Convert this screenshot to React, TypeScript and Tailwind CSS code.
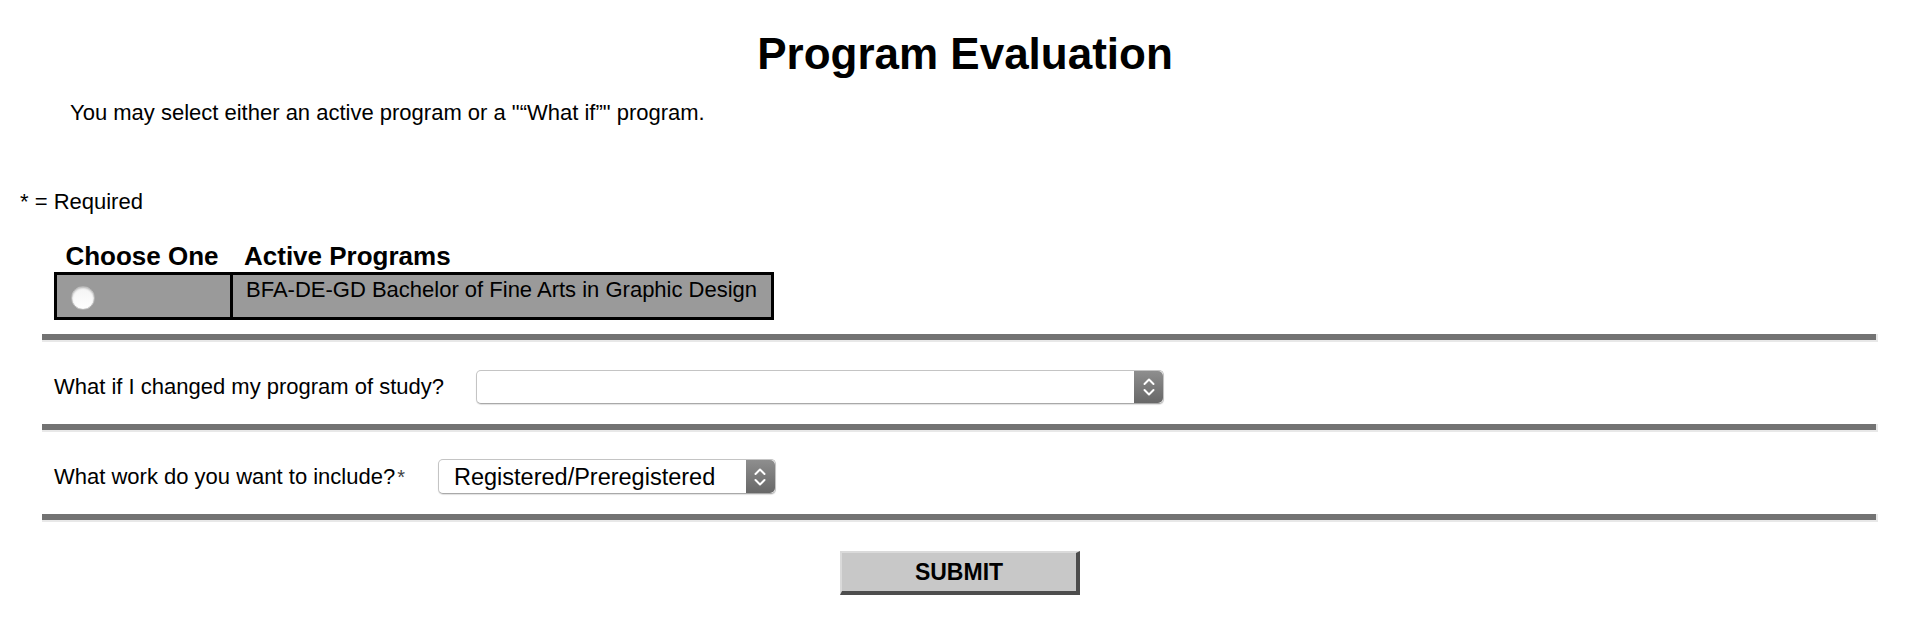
import React from "react";

function Chevrons() {
  return (
    <svg width="12" height="20" viewBox="0 0 12 20" fill="none">
      <path d="M1.5 7 L6 2.5 L10.5 7" stroke="white" strokeWidth="2" strokeLinecap="round" strokeLinejoin="round" />
      <path d="M1.5 13 L6 17.5 L10.5 13" stroke="white" strokeWidth="2" strokeLinecap="round" strokeLinejoin="round" />
    </svg>
  );
}

function FakeSelect({ width, height, text }: { width: string; height: string; text?: string }) {
  return (
    <div
      className={`flex items-stretch rounded-[5px] border border-[#c4c4c4] border-b-[#a9a9a9] bg-white shadow-[0_1px_1px_rgba(0,0,0,0.12)] ${width} ${height}`}
    >
      <div className="flex flex-1 items-center pl-[15px] text-[23.5px] leading-[26px] text-black">{text}</div>
      <div className="flex w-[29px] items-center justify-center rounded-r-[5px] bg-linear-to-b from-[#8e8e8e] to-[#686868]">
        <Chevrons />
      </div>
    </div>
  );
}

function Separator({ className = "" }: { className?: string }) {
  return <div className={`mx-[42px] h-[8px] bg-[#737373] border-b-2 border-r-2 border-[#e8e8e8] ${className}`} />;
}

export default function App() {
  return (
    <div className="min-h-[620px] w-full bg-white pt-[32px] text-black font-['Liberation_Sans',Arial,Helvetica,sans-serif]">
      <h1 className="pl-[10px] text-center text-[44px] font-bold leading-[44px]">Program Evaluation</h1>
      <p className="mt-[24px] pl-[70px] text-[22px] leading-[26px]">
        You may select either an active program or a "“What if”" program.
      </p>
      <p className="mt-[63px] pl-[20px] text-[22px] leading-[26px]">* = Required</p>

      <div className="ml-[54px] mt-[26px] w-[720px]">
        <div className="grid h-[30px] grid-cols-[176px_544px] items-center text-[26px] font-bold leading-[30px]">
          <div className="text-center">Choose One</div>
          <div className="pl-[14px]">Active Programs</div>
        </div>
        <div className="mt-[1px] flex h-[48px] border-[3px] border-black bg-[#9a9a9a]">
          <div className="flex w-[173px] items-center pl-[14px] pt-[3px]">
            <div className="h-[24px] w-[24px] rounded-full border border-[#b5b5b5] bg-linear-to-b from-[#f4f4f4] to-white shadow-[inset_0_1px_2px_rgba(0,0,0,0.25)]" />
          </div>
          <div className="flex-1 border-l-[3px] border-black pl-[13px] pt-[2px] text-[22px] leading-[26px]">
            BFA-DE-GD Bachelor of Fine Arts in Graphic Design
          </div>
        </div>
      </div>

      <Separator className="mt-[14px]" />

      <div className="flex items-center pb-[20px] pl-[54px] pt-[28px]">
        <span className="text-[22px] leading-[26px]">What if I changed my program of study?</span>
        <div className="ml-[32px]">
          <FakeSelect width="w-[688px]" height="h-[34px]" />
        </div>
      </div>

      <Separator />

      <div className="flex items-center pb-[20px] pl-[54px] pt-[27px]">
        <span className="text-[22px] leading-[26px]">
          What work do you want to include?<span className="ml-[2px] text-[20px] text-[#444]">*</span>
        </span>
        <div className="ml-[33px]">
          <FakeSelect width="w-[338px]" height="h-[35px]" text="Registered/Preregistered" />
        </div>
      </div>

      <Separator />

      <div className="mt-[29px] flex justify-center">
        <button className="h-[44px] w-[240px] border-l-2 border-t-2 border-b-4 border-r-4 border-l-[#dadada] border-t-[#dadada] border-b-[#4d4d4d] border-r-[#4d4d4d] bg-[#c8c8c8] text-[23px] font-bold leading-none text-black">
          SUBMIT
        </button>
      </div>
    </div>
  );
}
